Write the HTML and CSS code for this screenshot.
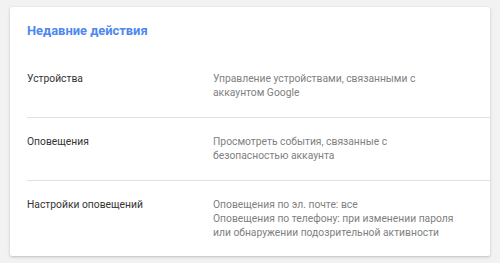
FILE: index.html
```html
<!DOCTYPE html>
<html lang="ru">
<head>
    <meta charset="UTF-8">
    <meta name="viewport" content="width=device-width, initial-scale=1.0">
    <title>Недавние действия</title>
    <link rel="stylesheet" href="styles.css">
</head>
<body>
    <div class="card">
        <h2 class="card-title">Недавние действия</h2>

        <div class="row">
            <div class="label">Устройства</div>
            <div class="desc">Управление устройствами, связанными с<br>аккаунтом Google</div>
        </div>

        <div class="row">
            <div class="label">Оповещения</div>
            <div class="desc">Просмотреть события, связанные с<br>безопасностью аккаунта</div>
        </div>

        <div class="row">
            <div class="label">Настройки оповещений</div>
            <div class="desc">
                Оповещения по эл. почте: все<br>
                Оповещения по телефону: при изменении пароля<br>
                или обнаружении подозрительной активности
            </div>
        </div>
    </div>
</body>
</html>
```

FILE: styles.css
```css
body {
    margin: 0;
    padding: 7px 10px;
    background-color: #f2f2f2;
    font-family: Roboto, "Noto Sans", Arial, sans-serif;
}
.card {
    background-color: #fff;
    padding: 0 0 16px 17px;
    border-radius: 2px;
    box-shadow: 0 1px 3px rgba(0, 0, 0, 0.22);
}
.card-title {
    margin: 0;
    padding: 15px 0;
    font-size: 12.9px;
    font-weight: 700;
    line-height: 18px;
    color: #4d88f0;
}
.row {
    display: flex;
    padding: 17px 0;
    border-bottom: 1px solid #e0e0e0;
    font-size: 10.3px;
    line-height: 14px;
}
.row:last-child {
    border-bottom: none;
    padding-bottom: 0;
}
.label {
    width: 186px;
    flex-shrink: 0;
    color: #333;
}
.desc {
    color: #808080;
}
```
